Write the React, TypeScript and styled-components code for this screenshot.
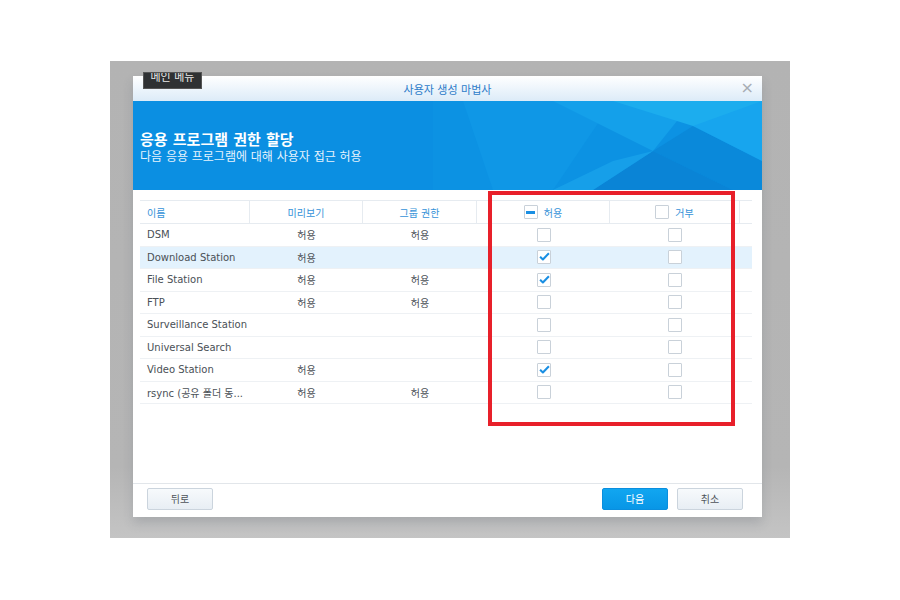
import styled, { createGlobalStyle } from 'styled-components';

const GlobalStyle = createGlobalStyle`
  html, body {
    margin: 0;
    padding: 0;
    background: #ffffff;
  }
  body {
    font-family: "DejaVu Sans", "Noto Sans CJK KR", sans-serif;
  }
`;

interface AppRow {
  name: string;
  preview: string;
  group: string;
  allow: boolean;
  selected?: boolean;
}

const rows: AppRow[] = [
  { name: 'DSM', preview: '허용', group: '허용', allow: false },
  { name: 'Download Station', preview: '허용', group: '', allow: true, selected: true },
  { name: 'File Station', preview: '허용', group: '허용', allow: true },
  { name: 'FTP', preview: '허용', group: '허용', allow: false },
  { name: 'Surveillance Station', preview: '', group: '', allow: false },
  { name: 'Universal Search', preview: '', group: '', allow: false },
  { name: 'Video Station', preview: '허용', group: '', allow: true },
  { name: 'rsync (공유 폴더 동...', preview: '허용', group: '허용', allow: false },
];

const Page = styled.div`
  width: 900px;
  height: 600px;
  padding: 61px 0 0 110px;
  box-sizing: border-box;
`;

const Backdrop = styled.div`
  position: relative;
  width: 680px;
  height: 477px;
  padding: 15px 28px 0 23px;
  box-sizing: border-box;
  background: linear-gradient(180deg, #b3b3b3 0%, #b5b5b5 85%, #c4c4c4 100%);
`;

const Tooltip = styled.div`
  position: absolute;
  left: 33px;
  top: 11px;
  width: 59px;
  height: 17px;
  background: #2f3133;
  border: 1px solid #555;
  box-sizing: border-box;
  color: #e8e8e8;
  font-size: 11px;
  line-height: 9px;
  text-align: center;
  overflow: hidden;
  z-index: 2;
`;

const Dialog = styled.div`
  width: 629px;
  height: 441px;
  background: #ffffff;
  display: flex;
  flex-direction: column;
  box-shadow: 0 6px 10px rgba(60, 70, 90, 0.18);
`;

const TitleBar = styled.div`
  height: 25px;
  flex: none;
  display: flex;
  align-items: center;
  justify-content: center;
  position: relative;
  background: linear-gradient(180deg, #ffffff 0%, #eaf3fb 60%, #dcebf8 100%);
  color: #2d7cc9;
  font-size: 11px;
`;

const CloseButton = styled.span`
  position: absolute;
  right: 8px;
  top: 4px;
  color: #a7adb3;
  font-size: 16px;
  line-height: 16px;
  font-family: "DejaVu Sans", sans-serif;
`;

const Banner = styled.div`
  position: relative;
  height: 89px;
  flex: none;
  background: #0b8fe2;
  overflow: hidden;
  display: flex;
  flex-direction: column;
  justify-content: center;
  padding: 4px 0 0 7px;
  box-sizing: border-box;
`;

const BannerArt = styled.svg`
  position: absolute;
  left: 0;
  top: 0;
`;

const BannerTitle = styled.div`
  position: relative;
  color: #ffffff;
  font-weight: bold;
  font-size: 15px;
  line-height: 19px;
`;

const BannerSub = styled.div`
  position: relative;
  color: #e6f3fd;
  font-size: 12px;
  line-height: 14px;
`;

const Body = styled.div`
  flex: 1;
  padding: 10px 10px 0 7px;
  display: flex;
  flex-direction: column;
`;

const Table = styled.div`
  flex: 1;
  display: flex;
  flex-direction: column;
`;

const Grid = styled.div<{ $selected?: boolean; $header?: boolean }>`
  display: grid;
  grid-template-columns: 110px 113px 114px 133px 130px 12px;
  height: ${(p) => (p.$header ? '24px' : '22.5px')};
  border-bottom: 1px solid ${(p) => (p.$header ? '#e6ebf0' : '#eef1f4')};
  border-top: ${(p) => (p.$header ? '1px solid #e6ebf0' : 'none')};
  background: ${(p) => (p.$selected ? '#e3f2fd' : 'transparent')};
  box-sizing: border-box;
`;

const HeadCell = styled.div<{ $align?: 'left' | 'center' }>`
  display: flex;
  align-items: center;
  justify-content: ${(p) => (p.$align === 'left' ? 'flex-start' : 'center')};
  gap: 6px;
  padding-left: ${(p) => (p.$align === 'left' ? '7px' : '0')};
  border-right: 1px solid #e6ebf0;
  color: #3592d8;
  font-size: 10px;
  &:last-child {
    border-right: none;
  }
`;

const Cell = styled.div<{ $align?: 'left' | 'center' }>`
  display: flex;
  align-items: center;
  justify-content: ${(p) => (p.$align === 'left' ? 'flex-start' : 'center')};
  padding-left: ${(p) => (p.$align === 'left' ? '7px' : '0')};
  color: #4a5056;
  font-size: 10px;
  white-space: nowrap;
`;

const Box = styled.span`
  width: 14px;
  height: 14px;
  border: 1px solid #c9d1d9;
  border-radius: 1px;
  background: #ffffff;
  box-sizing: border-box;
  display: inline-flex;
  align-items: center;
  justify-content: center;
  overflow: visible;
`;

const Minus = styled.span`
  width: 9px;
  height: 3px;
  background: #1a8fe3;
`;

const Footer = styled.div`
  flex: none;
  border-top: 1px solid #e2e6ea;
  height: 34px;
  display: flex;
  align-items: center;
  padding: 0 19px 4px 14px;
  box-sizing: border-box;
  gap: 9px;
`;

const Spacer = styled.div`
  flex: 1;
`;

const Button = styled.button<{ $primary?: boolean }>`
  width: 66px;
  height: 22px;
  border-radius: 2px;
  font-family: "DejaVu Sans", "Noto Sans CJK KR", sans-serif;
  font-size: 10px;
  cursor: pointer;
  border: 1px solid ${(p) => (p.$primary ? '#0a8ede' : '#cbd4dd')};
  color: ${(p) => (p.$primary ? '#ffffff' : '#4d5359')};
  background: ${(p) =>
    p.$primary
      ? 'linear-gradient(180deg, #11a6f0 0%, #0896e6 100%)'
      : 'linear-gradient(180deg, #f7fafc 0%, #e8eef4 100%)'};
`;

const Highlight = styled.div`
  position: absolute;
  left: 378px;
  top: 130px;
  width: 247px;
  height: 235px;
  border: 4px solid #e8202a;
  box-sizing: border-box;
  pointer-events: none;
  z-index: 3;
`;

const Check = () => (
  <svg width="15" height="13" viewBox="0 0 15 13" style={{ marginTop: -1, marginLeft: 1 }}>
    <path d="M1.5 7 L5.3 10.6 L13.5 2" fill="none" stroke="#1a8fe3" strokeWidth="2.8" strokeLinejoin="round" />
  </svg>
);

const CheckBox = ({ checked }: { checked?: boolean }) => <Box>{checked && <Check />}</Box>;

export default function App() {
  return (
    <Page>
      <GlobalStyle />
      <Backdrop>
        <Tooltip>메인 메뉴</Tooltip>
        <Highlight />
        <Dialog>
          <TitleBar>
            사용자 생성 마법사
            <CloseButton>×</CloseButton>
          </TitleBar>
          <Banner>
            <BannerArt width="629" height="89" viewBox="0 0 629 89">
              <polygon points="300,0 629,0 629,89 300,89" fill="#0c92e3" />
              <polygon points="330,0 480,0 420,89 360,89" fill="#0f97e6" />
              <polygon points="420,0 560,0 520,50" fill="#14a0ea" />
              <polygon points="480,0 629,0 629,30 560,25" fill="#1cadee" />
              <polygon points="520,50 560,25 629,60 629,89 600,89" fill="#0a89da" />
              <polygon points="560,25 629,0 629,60" fill="#17a5ee" />
              <polygon points="460,89 520,50 600,89" fill="#0a84d6" />
              <polygon points="420,89 480,60 520,50 460,89" fill="#169fe9" />
            </BannerArt>
            <BannerTitle>응용 프로그램 권한 할당</BannerTitle>
            <BannerSub>다음 응용 프로그램에 대해 사용자 접근 허용</BannerSub>
          </Banner>
          <Body>
            <Table>
              <Grid $header>
                <HeadCell $align="left">이름</HeadCell>
                <HeadCell>미리보기</HeadCell>
                <HeadCell>그룹 권한</HeadCell>
                <HeadCell>
                  <Box>
                    <Minus />
                  </Box>
                  허용
                </HeadCell>
                <HeadCell>
                  <CheckBox />
                  거부
                </HeadCell>
                <HeadCell />
              </Grid>
              {rows.map((r) => (
                <Grid key={r.name} $selected={r.selected}>
                  <Cell $align="left">{r.name}</Cell>
                  <Cell>{r.preview}</Cell>
                  <Cell>{r.group}</Cell>
                  <Cell>
                    <CheckBox checked={r.allow} />
                  </Cell>
                  <Cell>
                    <CheckBox />
                  </Cell>
                  <Cell />
                </Grid>
              ))}
            </Table>
          </Body>
          <Footer>
            <Button>뒤로</Button>
            <Spacer />
            <Button $primary>다음</Button>
            <Button>취소</Button>
          </Footer>
        </Dialog>
      </Backdrop>
    </Page>
  );
}
